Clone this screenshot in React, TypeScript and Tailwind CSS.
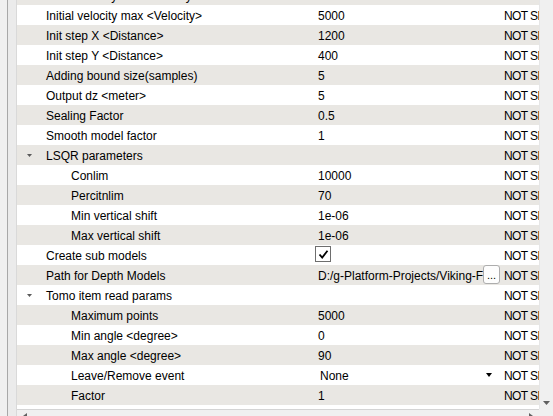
interface PropRow {
  name: string
  value?: string
  level: 0 | 1
  group?: boolean
  kind?: 'check' | 'path' | 'combo'
}

const rows: PropRow[] = [
  { name: 'Initial velocity min <Velocity>', value: '1500', level: 0 },
  { name: 'Initial velocity max <Velocity>', value: '5000', level: 0 },
  { name: 'Init step X <Distance>', value: '1200', level: 0 },
  { name: 'Init step Y <Distance>', value: '400', level: 0 },
  { name: 'Adding bound size(samples)', value: '5', level: 0 },
  { name: 'Output dz <meter>', value: '5', level: 0 },
  { name: 'Sealing Factor', value: '0.5', level: 0 },
  { name: 'Smooth model factor', value: '1', level: 0 },
  { name: 'LSQR parameters', level: 0, group: true },
  { name: 'Conlim', value: '10000', level: 1 },
  { name: 'Percitnlim', value: '70', level: 1 },
  { name: 'Min vertical shift', value: '1e-06', level: 1 },
  { name: 'Max vertical shift', value: '1e-06', level: 1 },
  { name: 'Create sub models', level: 0, kind: 'check' },
  { name: 'Path for Depth Models', value: 'D:/g-Platform-Projects/Viking-Field/DepthModels', level: 0, kind: 'path' },
  { name: 'Tomo item read params', level: 0, group: true },
  { name: 'Maximum points', value: '5000', level: 1 },
  { name: 'Min angle <degree>', value: '0', level: 1 },
  { name: 'Max angle <degree>', value: '90', level: 1 },
  { name: 'Leave/Remove event', value: 'None', level: 1, kind: 'combo' },
  { name: 'Factor', value: '1', level: 1 },
]

function ValueCell({ row }: { row: PropRow }) {
  if (row.kind === 'check') {
    return (
      <div className="w-[187px] shrink-0">
        <span className="ml-[2px] flex h-[16px] w-[16px] items-center justify-center border border-[#6e6e6e] bg-white">
          <svg width="11" height="11" viewBox="0 0 11 11">
            <path d="M1.5 5.5 L4.2 8.5 L9.5 1.8" fill="none" stroke="#000" strokeWidth="1.8" />
          </svg>
        </span>
      </div>
    )
  }
  if (row.kind === 'path') {
    return (
      <div className="flex w-[187px] shrink-0">
        <span className="min-w-0 flex-1 overflow-hidden whitespace-nowrap pl-[5px]">{row.value}</span>
        <span className="-mt-px flex h-[19px] w-[17px] shrink-0 items-end justify-center rounded-[3px] border border-[#adadad] bg-[#fdfdfd] pb-[3px] text-[11px] leading-[10px]">
          ...
        </span>
      </div>
    )
  }
  if (row.kind === 'combo') {
    return (
      <div className="flex w-[187px] shrink-0 items-start">
        <span className="flex-1 pl-[7px]">{row.value}</span>
        <svg className="mr-[8px] mt-[7px]" width="6" height="4" viewBox="0 0 6 4">
          <path d="M0 0 H6 L3 4 Z" fill="#000" />
        </svg>
      </div>
    )
  }
  return <div className="w-[187px] shrink-0 overflow-hidden whitespace-nowrap pl-[5px]">{row.value}</div>
}

export default function App() {
  return (
    <div className="flex h-[416px] w-[553px] overflow-hidden bg-[#f0f0f0] font-['Liberation_Sans',Arial,sans-serif] text-[12px] text-black">
      {/* left frame edge */}
      <div className="w-[7px] shrink-0 bg-[#f0f0f0]" />
      <div className="w-px shrink-0 bg-[#a8a8a8]" />
      <div className="w-[9px] shrink-0 border-r border-[#d9d9d9] bg-[#ebebeb]" />

      <div className="flex min-w-0 flex-1 flex-col">
        <div className="flex min-h-0 flex-1">
          {/* tree */}
          <div className="min-w-0 flex-1 overflow-hidden bg-white">
            <div className="-mt-[15px]">
              {rows.map((row, i) => (
                <div
                  key={row.name}
                  className={`flex h-5 items-start overflow-hidden pt-px leading-[21px] ${i % 2 === 0 ? 'bg-[#e9e7e3]' : 'bg-white'}`}
                >
                  <div className="flex w-[296px] shrink-0 items-start overflow-hidden whitespace-nowrap">
                    <div className={`shrink-0 ${row.level === 0 ? 'w-[29px]' : 'w-[54px]'}`}>
                      {row.group && (
                        <svg className="ml-[10px] mt-[8px]" width="5" height="3" viewBox="0 0 5 3">
                          <path d="M0 0 H5 L2.5 3 Z" fill="#5a5a5a" />
                        </svg>
                      )}
                    </div>
                    <span>{row.name}</span>
                  </div>
                  <ValueCell row={row} />
                  <div className="whitespace-nowrap pl-[4px] tracking-[-0.6px]">NOT SET</div>
                </div>
              ))}
              <div className="h-5 bg-white" />
            </div>
          </div>
          {/* vertical scrollbar */}
          <div className="flex w-[14px] shrink-0 flex-col justify-end border-l border-[#e6e6e6] bg-[#f0f0f0] pb-[4px]">
            <svg className="ml-[3px]" width="7" height="4" viewBox="0 0 7 4">
              <path d="M0 0 H7 L3.5 4 Z" fill="#606060" />
            </svg>
          </div>
        </div>
        {/* horizontal scrollbar (partly visible) */}
        <div className="flex h-[7px] shrink-0">
          <div className="flex flex-1 items-end justify-between border-t border-[#d4d4d4] bg-[#f0f0f0] px-[6px]">
            <svg width="4" height="3" viewBox="0 0 4 3">
              <path d="M4 0 L0 3 H4 Z" fill="#606060" />
            </svg>
            <svg width="4" height="3" viewBox="0 0 4 3">
              <path d="M0 0 L4 3 H0 Z" fill="#606060" />
            </svg>
          </div>
          <div className="w-[14px] shrink-0 bg-[#f0f0f0]" />
        </div>
      </div>
    </div>
  )
}
